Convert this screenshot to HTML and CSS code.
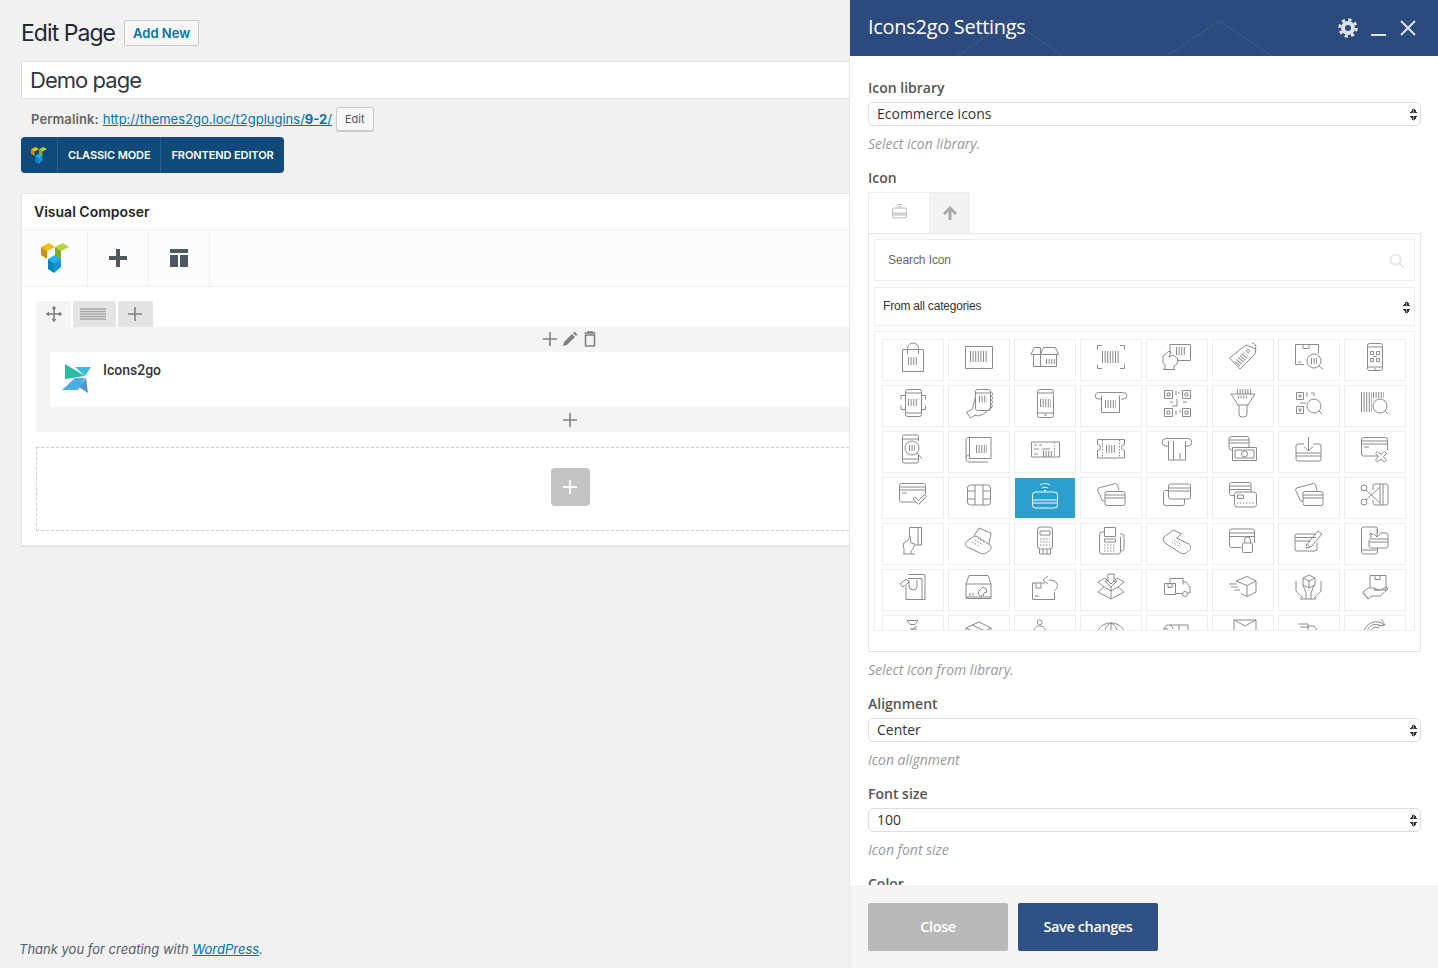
FILE: index.html
```html
<!DOCTYPE html>
<html lang="en">
<head>
<meta charset="utf-8">
<title>Edit Page</title>
<link rel="stylesheet" href="styles.css">
</head>
<body>
<svg class="defs" aria-hidden="true">
  <symbol id="vc" viewBox="41 242 28 30">
    <path fill="#fdb813" d="M41 246l8-4 6 4-8 4z"/>
    <path fill="#c9920e" d="M41 246l6 4v8l-6-4z"/>
    <path fill="#b5d334" d="M55 246l8-4 6 4-8 4z"/>
    <path fill="#8aa82c" d="M55 246l6 4v8l-6 4v-8z"/>
    <path fill="#1cb3f0" d="M48 258l7-4 6 4-7 4z"/>
    <path fill="#0b83bd" d="M48 258l6 4v10l-6-4z"/>
    <path fill="#1496d4" d="M54 262l7-4v8l-7 6z"/>
  </symbol>
</svg>

<main class="wrap">
  <div class="head"><h1>Edit Page</h1><a class="addnew">Add New</a></div>
  <div class="title">Demo page</div>
  <div class="perma"><b>Permalink:</b><a class="link plink">http://themes2go.loc/t2gplugins/<b>9-2</b>/</a><span class="editbtn">Edit</span></div>
  <div class="modes">
    <span class="mode-logo"><svg class="mini"><use href="#vc"/></svg></span>
    <span class="mode">CLASSIC MODE</span>
    <span class="mode">FRONTEND EDITOR</span>
  </div>
  <section class="vc">
    <div class="vc-title">Visual Composer</div>
    <div class="vc-bar">
      <span class="vc-cell"><svg class="vc-logo"><use href="#vc"/></svg></span>
      <span class="vc-cell"><svg class="tb" viewBox="0 0 20 20"><path d="M8 1h4v7h7v4h-7v7H8v-7H1V8h7z"/></svg></span>
      <span class="vc-cell"><svg class="tb" viewBox="0 0 20 20"><path d="M1 1h18v4H1zM1 7h8v12H1zM11 7h8v12h-8z"/></svg></span>
    </div>
    <div class="canvas">
      <div class="tabs">
        <span class="tab tab-move"><svg class="gl" viewBox="0 0 16 16"><path d="M8 1v14M1 8h14M6.500 3L8 1l1.500 2M6.500 13L8 15l1.500-2M3 6.500L1 8l2 1.500M13 6.500L15 8l-2 1.500"/></svg></span>
        <span class="tab tab-lines"><svg class="lines" viewBox="0 0 26 13"><path d="M0 1h26M0 3.500h26M0 6h26M0 8.500h26M0 11h26"/></svg></span>
        <span class="tab tab-plus"><svg class="gl" viewBox="0 0 16 16"><path d="M8 1v14M1 8h14"/></svg></span>
      </div>
      <div class="rowbody">
        <div class="rowtools">
          <svg class="gl" viewBox="0 0 16 16"><path d="M8 1v14M1 8h14"/></svg>
          <svg class="gl" viewBox="0 0 16 16"><path class="solid" d="M1 15l1-4 8-8 3 3-8 8zM11 2l1.500-1.500 3 3L14 5z"/></svg>
          <svg class="gl" viewBox="0 0 16 16"><path d="M3.500 4h9v10.500a.5.5 0 0 1-.5.5H4a.5.5 0 0 1-.5-.5zM2.500 2h11M5 1h6"/></svg>
        </div>
        <div class="card">
          <svg class="brand" viewBox="62 364 30 30">
            <path fill="#2bbba3" d="M65 364l20 12-20 3z"/>
            <path fill="#36bfdc" d="M75 367l16 0-6 9z"/>
            <path fill="#48b0e4" d="M62 390l13-12 10 0-7 12z"/>
            <path fill="#4f95cf" d="M79 387l7-9 2 15z"/>
          </svg>
          <span class="brandname">Icons2go</span>
        </div>
        <div class="rowfoot"><svg class="gl" viewBox="0 0 16 16"><path d="M8 1v14M1 8h14"/></svg></div>
      </div>
      <div class="dashed"><span class="addrow"><svg class="addplus" viewBox="0 0 16 16"><path d="M8 1v14M1 8h14"/></svg></span></div>
    </div>
  </section>
  <footer class="thanks">Thank you for creating with <a class="link">WordPress</a>.</footer>
</main>

<aside class="panel">
  <header class="p-head">
    <svg class="p-bg" viewBox="0 0 588 56"><path d="M107 56L160 20l53 36M317 56l52-35 53 35"/></svg>
    <h2>Icons2go Settings</h2>
    <div class="p-ctrl">
      <svg class="gear" viewBox="0 0 20 20"><circle class="gear-ring" cx="10" cy="10" r="5"/><circle class="gear-teeth" cx="10" cy="10" r="8.200"/></svg>
      <svg class="ctl" viewBox="0 0 16 16"><path d="M0 15h15"/></svg>
      <svg class="ctl" viewBox="0 0 16 16"><path d="M1 1l14 14M15 1L1 15"/></svg>
    </div>
  </header>
  <div class="p-body">
    <div class="label">Icon library</div>
    <div class="sel">Ecommerce icons<span class="arrows"></span></div>
    <div class="help">Select icon library.</div>

    <div class="label">Icon</div>
    <div class="pick-tabs">
      <span class="pt pt-icon"><svg class="pt-svg" viewBox="18 6 26 26"><path d="M26 8c3-2 7-2 10 0M28 11c2-1 4-1 6 0"/><rect x="18.500" y="13" width="25" height="17" rx="3"/><path d="M18.500 22h25M18.500 25h25"/></svg></span>
      <span class="pt pt-up"><svg class="up" viewBox="0 0 16 16"><path d="M8 1l7 7-2 2-3.500-3.500V15h-3V6.500L3 10 1 8z"/></svg></span>
    </div>
    <div class="picker">
      <div class="search">Search Icon<svg class="mag" viewBox="0 0 16 16"><circle cx="6.500" cy="6.500" r="5"/><path d="M10 10l5 5"/></svg></div>
      <div class="cat">From all categories<span class="arrows"></span></div>
      <div class="grid">
        <div class="cell"><svg class="ic" viewBox="1 1 60 40"><path d="M20.500 10.500h21v22h-21zM25.500 15V9.500a5.500 5.500 0 0 1 11 0V15"/><path class="bc" stroke-width="8" d="M26 22h10"/></svg></div>
        <div class="cell"><svg class="ic" viewBox="1 1 60 40"><path d="M17.500 7.500h27v22h-27z"/><path class="bc" stroke-width="11" d="M22 17.500h17"/></svg></div>
        <div class="cell"><svg class="ic" viewBox="1 1 60 40"><path d="M19.500 15.500v12h23v-12M26.500 15.500v12M19.500 15.500H17l3-7h6.500v7zM26.500 15.500l3-7h12l3 7z"/><path class="bc" stroke-width="5" d="M32 22.500h9"/></svg></div>
        <div class="cell"><svg class="ic" viewBox="1 1 60 40"><path d="M22 6.500h-4.500v4M40 6.500h4.500v4M22 29.500h-4.500v-4M40 29.500h4.500v-4"/><path class="bc" stroke-width="12" d="M22 18h18"/></svg></div>
        <div class="cell"><svg class="ic" viewBox="1 1 60 40"><path d="M24 14V5.500h20.500v16h-13M19 30v-4l-2-3v-6l6-5 2 1-2 5 4-2 5 4-1 5-3 2v3M17 30.500h12"/><path class="bc" stroke-width="8" d="M30 12h9"/></svg></div>
        <div class="cell"><svg class="ic" viewBox="1 1 60 40"><path d="M17.500 19L34 6l10 4-1 5-15 15zM36 10.500a1.500 1.500 0 1 0 .1 0M40 4c3 0 5 3 3 7"/><path class="bc" stroke-width="7" d="M25 25L34 15"/></svg></div>
        <div class="cell"><svg class="ic" viewBox="1 1 60 40"><path d="M26 25.500h-8.500v-20h23v9M25 5.500v4h6v-4M20 23h3M41 27l4 3"/><circle cx="36" cy="22" r="7"/><path class="bc" stroke-width="6" d="M33 22h6"/></svg></div>
        <div class="cell"><svg class="ic" viewBox="1 1 60 40"><rect x="23.500" y="4.500" width="15" height="27" rx="2"/><path d="M23.500 8h15M23.500 28h15M30 30h2M26.500 12.500h3v3h-3zM32.500 12.500h3v3h-3zM26.500 19.500h3v3h-3zM32.500 19.500h3v3h-3zM29 17.500h4"/></svg></div>

        <div class="cell"><svg class="ic" viewBox="1 1 60 40"><rect x="23.500" y="4.500" width="16" height="27" rx="2"/><path d="M23.500 8h16M23.500 28h16M23 10.500h-4v4M40 10.500h3.500v4M23 24.500h-4v-4M40 24.500h3.500v-4"/><path class="bc" stroke-width="7" d="M26 17.500h10"/></svg></div>
        <div class="cell"><svg class="ic" viewBox="1 1 60 40"><rect x="27.500" y="4.500" width="15" height="21" rx="2"/><path d="M27.500 8h15M42.500 7c3 0 3 4 0 4 3 0 3 4 0 4 3 0 3 4 0 4 3 0 2 4-1 5l-6 5-5 2-4-1M27.500 12l-2 7-1 5-6 3 4 6 5-3"/><path class="bc" stroke-width="7" d="M31 14h8"/></svg></div>
        <div class="cell"><svg class="ic" viewBox="1 1 60 40"><rect x="23.500" y="4.500" width="16" height="28" rx="2"/><path d="M23.500 8h16M23.500 28h16M30 30h3"/><path class="bc" stroke-width="8" d="M26 18h11"/></svg></div>
        <div class="cell"><svg class="ic" viewBox="1 1 60 40"><path d="M21 14h-2.500a2 2 0 0 1 0-6.500h25a2 2 0 0 1 0 6.500H41M21.500 10.500v17h18v-17"/><path class="bc" stroke-width="8" d="M25 19h11"/></svg></div>
        <div class="cell"><svg class="ic" viewBox="1 1 60 40"><path d="M18.500 5.500h8v8h-8zM36.500 5.500h8v8h-8zM18.500 23.500h8v8h-8zM36.500 23.500h8v8h-8zM21 8h3v3h-3zM39 8h3v3h-3zM21 26h3v3h-3zM39 26h3v3h-3zM30 6v4M33 7v2M24 17h3M31 14v7h-5M37 17h4M30 25v5M34 25v3"/></svg></div>
        <div class="cell"><svg class="ic" viewBox="1 1 60 40"><path d="M19 9h24l-7 11H26zM27 20v9a3 3 0 0 0 3 3h2a3 3 0 0 0 3-3v-9"/><path class="bc" stroke-width="5" d="M25 6.500h14"/><path class="bc" stroke-width="3" d="M26 12h10"/></svg></div>
        <div class="cell"><svg class="ic" viewBox="1 1 60 40"><path d="M18.500 7.500h7v7h-7zM18.500 21.500h7v7h-7zM21 10h2v2h-2zM21 24h2v2h-2zM29 7v5M33 8h3v3M22 18h6"/><circle cx="36" cy="21" r="7"/><path d="M41 26l3 3"/></svg></div>
        <div class="cell"><svg class="ic" viewBox="1 1 60 40"><path class="bc" stroke-width="20" d="M17 17h11"/><path class="bc" stroke-width="6" d="M29 10h11"/><circle cx="36" cy="21" r="7"/><path d="M41 26l3 3"/></svg></div>

        <div class="cell"><svg class="ic" viewBox="1 1 60 40"><path d="M36.500 10V6a2 2 0 0 0-2-2h-12a2 2 0 0 0-2 2v24a2 2 0 0 0 2 2h12a2 2 0 0 0 2-2v-6M20.500 8h16M20.500 28h16M35 22l5 6"/><circle cx="30" cy="17" r="7"/><path class="bc" stroke-width="6" d="M27 17h6"/></svg></div>
        <div class="cell"><svg class="ic" viewBox="1 1 60 40"><path d="M21.500 6.500H43v21H21.500zM21.500 6.500c-3 0-3.500 1-3.500 3v18c0 2 1 3.500 3 3.500h19M18 27c0-2 2-3 3.500-3"/><path class="bc" stroke-width="8" d="M28 18h11"/></svg></div>
        <div class="cell"><svg class="ic" viewBox="1 1 60 40"><path d="M17.500 11h28v15h-28zM20 14h3M25 14h3M20 18h5M28 18h8M20 23h4"/><path class="dash" d="M40.500 11v15"/><path class="bc" stroke-width="6" d="M29 23h9"/></svg></div>
        <div class="cell"><svg class="ic" viewBox="1 1 60 40"><path d="M17.500 8.500h27v5a3 3 0 0 0 0 6V27h-27v-7.500a3 3 0 0 0 0-6z"/><path class="dash" d="M22.500 9v18M39.500 9v18"/><path class="bc" stroke-width="8" d="M26 18h10"/></svg></div>
        <div class="cell"><svg class="ic" viewBox="1 1 60 40"><path d="M22 15h-2a2.500 2.500 0 0 1 0-7.500h22a2.500 2.500 0 0 1 0 7.500h-2.500M22.500 10v19h17V10M27.500 10v19M34 22v6"/></svg></div>
        <div class="cell"><svg class="ic" viewBox="1 1 60 40"><path d="M21 19h-1.500A2.500 2.500 0 0 1 17 16.500V8a2.500 2.500 0 0 1 2.500-2.500h15A2.500 2.500 0 0 1 37 8v8M17 9h20M17 12h20M20.500 16.500h24v13h-24zM23 19h19v8H23z"/><circle cx="32.500" cy="23" r="3"/></svg></div>
        <div class="cell"><svg class="ic" viewBox="1 1 60 40"><path d="M26 13h-6a2 2 0 0 0-2 2v13a2 2 0 0 0 2 2h21a2 2 0 0 0 2-2V15a2 2 0 0 0-2-2h-6M18 22h25M18 25h25M30.500 6v14M26 15.500l4.500 4.500 4.500-4.500"/></svg></div>
        <div class="cell"><svg class="ic" viewBox="1 1 60 40"><path d="M34 25H19.500a2 2 0 0 1-2-2V8.500a2 2 0 0 1 2-2h22a2 2 0 0 1 2 2V19M17.500 10h26M17.500 13h26M20 16h5M33.500 20.500l3.500 3 3.500-3 2 2-3 3 3 3.500-2 2-3.500-3-3.500 3-2-2 3-3.500-3-3z"/></svg></div>

        <div class="cell"><svg class="ic" viewBox="1 1 60 40"><path d="M34 25H19.500a2 2 0 0 1-2-2V8.500a2 2 0 0 1 2-2h22a2 2 0 0 1 2 2V17M17.500 10h26M17.500 13h26M20 16h5M31 22l2-2 3.500 3.500 6-6 2 2-8 8z"/></svg></div>
        <div class="cell"><svg class="ic" viewBox="1 1 60 40"><rect x="19.500" y="8" width="23" height="20" rx="3"/><path d="M27 8v6h-7.500M27 28v-6h-7.500M27 14v8M35 8v6h7.500M35 28v-6h7.500M35 14v8"/></svg></div>
        <div class="cell on"><svg class="ic" viewBox="1 1 60 40"><path d="M26 8c3-2 7-2 10 0M28 11c2-1 4-1 6 0M30 13.500h2"/><rect x="18.500" y="15" width="25" height="16" rx="3"/><path d="M18.500 23h25M18.500 26h25"/></svg></div>
        <div class="cell"><svg class="ic" viewBox="1 1 60 40"><path d="M24.500 24h-2l-5-11 1-2 17-4.500 2 1 1.500 6"/><rect x="25" y="14.500" width="20" height="14" rx="2"/><path d="M25 18h20M25 21h20"/></svg></div>
        <div class="cell"><svg class="ic" viewBox="1 1 60 40"><rect x="22.500" y="7" width="22" height="15" rx="2"/><path d="M22.500 11h22M22.500 14h22M22.500 13.500h-3a2 2 0 0 0-2 2v11a2 2 0 0 0 2 2h17a2 2 0 0 0 2-2V22"/></svg></div>
        <div class="cell"><svg class="ic" viewBox="1 1 60 40"><path d="M22 18.500h-2.500a2 2 0 0 1-2-2v-9a2 2 0 0 1 2-2H37a2 2 0 0 1 2 2v8M17.500 9H39M17.500 12.500H39"/><rect x="22.500" y="15" width="22" height="15" rx="2.500"/><path d="M25.500 18h6v3.500h-6z"/><path class="dash" d="M25 26h17"/></svg></div>
        <div class="cell"><svg class="ic" viewBox="1 1 60 40"><path d="M24.500 24h-2l-5-11 1-2 17-4.500 2 1 1.500 6"/><rect x="25" y="14.500" width="20" height="14" rx="2"/><path d="M25 18h20M25 21h20"/></svg></div>
        <div class="cell"><svg class="ic" viewBox="1 1 60 40"><path d="M29 13V9a2 2 0 0 1 2-2h11a2 2 0 0 1 2 2v17a2 2 0 0 1-2 2H31a2 2 0 0 1-2-2v-3M36 7v21M39 7v21M22 13l14 13M22 23l14-13"/><circle cx="20" cy="11" r="3"/><circle cx="20" cy="25" r="3"/></svg></div>

        <div class="cell"><svg class="ic" viewBox="1 1 60 40"><path d="M27.500 13V4.500h12V22h-6M36 5v17M22 31v-5l-1-5 5-4 2-4 1 7 4 1-2 5-2 2v3M21 31h12"/></svg></div>
        <div class="cell"><svg class="ic" viewBox="1 1 60 40"><path d="M19 18l6-4c2-1 4-1 5 0l12 8c2 2 1 5-1 6l-3 2c-2 1-4 1-6 0l-13-6c-2-1-2-4 0-6zM26 13l5-8 12 5-2 11"/><path class="dash" d="M27 17l8 5M30 15l7 5M24 19l8 5"/></svg></div>
        <div class="cell"><svg class="ic" viewBox="1 1 60 40"><rect x="23.500" y="4" width="15" height="22" rx="3"/><path d="M26 8h10v4H26zM25.500 26v5h11v-5M29 26v5M33 26v5"/><path class="dash" d="M26 16h10M26 19h10M26 22h10"/></svg></div>
        <div class="cell"><svg class="ic" viewBox="1 1 60 40"><path d="M24 9h-2a2.500 2.500 0 0 0-2.500 2.500v17A2.500 2.500 0 0 0 22 31h16a2.500 2.500 0 0 0 2.500-2.500V14M24.500 4.500h11v9h-11zM24.500 16h11v3h-11zM40 11h2a2 2 0 0 1 2 2v12c0 2-1 3-3 3"/><path class="dash" d="M24 22h12M24 25h12M24 28h12"/></svg></div>
        <div class="cell"><svg class="ic" viewBox="1 1 60 40"><path d="M17.500 15c0-1 1-2 2-2l5-4 3-2 8 4-5 4 12 6c2 1 3 4 1 6l-2 2c-2 2-5 2-7 1L19 20c-1-1-2-3-1.500-5z"/><path class="dash" d="M28 17l8 5M26 19l8 5"/></svg></div>
        <div class="cell"><svg class="ic" viewBox="1 1 60 40"><path d="M29 24.500h-9.500a2 2 0 0 1-2-2V8a2 2 0 0 1 2-2h21a2 2 0 0 1 2 2v12M17.500 10h25M17.500 13.500h25M32.500 20v-3a3 3 0 0 1 6 0v3"/><rect x="30.500" y="20" width="10" height="9.500" rx="1"/></svg></div>
        <div class="cell"><svg class="ic" viewBox="1 1 60 40"><path d="M39 20v6a2 2 0 0 1-2 2H19a2 2 0 0 1-2-2V13a2 2 0 0 1 2-2h19M17 14.500h21M17 18h16M28 25l1-4 11-13 4 3-11 13zM29 21l3 3"/></svg></div>
        <div class="cell"><svg class="ic" viewBox="1 1 60 40"><path d="M33.500 10V6a2 2 0 0 0-2-2h-12a2 2 0 0 0-2 2v23a2 2 0 0 0 2 2h12a2 2 0 0 0 2-2v-4M17.500 27h16M36 10h6a2 2 0 0 1 2 2v11a2 2 0 0 1-2 2H27a2 2 0 0 1-2-2v-6M25 19h19M25 16h19M33 6v8M30 11l3 3 3-3M27 15v-5M25 12l2-2 2 2"/></svg></div>

        <div class="cell"><svg class="ic" viewBox="1 1 60 40"><path d="M26 5.500h17v25H24V17M26 9.500h14v21M40 5.500l3 0M27 11v6a4 4 0 0 0 8 0v-6M18 15l6-5 3 3-6 5z"/></svg></div>
        <div class="cell"><svg class="ic" viewBox="1 1 60 40"><path d="M18 15l3-8.500h19l3 8.500M18 15h25v14.500H18zM18 28h25M22 24v3M25 24v3M31 22l4-4 3 2 1 3-3 1-1 3h-3l-2-2z"/></svg></div>
        <div class="cell"><svg class="ic" viewBox="1 1 60 40"><path d="M31 14H18.500v16.500h22V23M27 14v5h-5v-5M40 22c3-2 4-5 3-7-1-3-4-4-8-4M34 7l-5 4 5 4M21 27h4"/></svg></div>
        <div class="cell"><svg class="ic" viewBox="1 1 60 40"><path d="M18 13l7-4 6 6 6-6 7 4-6 5 6 5-13 7-13-7 6-5zM31 18v12M24 18l7 4 7-4M28 5h6v7h3l-6 6-6-6h3z"/></svg></div>
        <div class="cell"><svg class="ic" viewBox="1 1 60 40"><path d="M18.500 14.500h11v11h-11zM22 14.500v4h4v-4M24 14V9.500h13v6M37 13h3l4 5v6h-2M37 24.500h-7"/><circle cx="39" cy="25" r="2.500"/></svg></div>
        <div class="cell"><svg class="ic" viewBox="1 1 60 40"><path d="M24 12l11-4.500 9 4.500v11l-9 4.500-6-3M24 12l11 4.500 9-4.500M35 16.500v11M17 15h8M19 18h7M22 21h6"/></svg></div>
        <div class="cell"><svg class="ic" viewBox="1 1 60 40"><path d="M31 6l6 3v7l-6 3-6-3V9zM25 9l6 3 6-3M31 12v7M18 12v9c0 3 4 4 6 7v2M25 16l3 8v6M43 12v9c0 3-4 4-6 7v2M36 16l-3 8v6M22 30h16"/></svg></div>
        <div class="cell"><svg class="ic" viewBox="1 1 60 40"><path d="M26 18V6.500h16V21h-6M31 6.500v4h5v-4M19 23l5-4h6l5 2h-5 7l5-3 2 2-8 7h-8l-4 3zM18.500 24l5 5"/></svg></div>

        <div class="cell"><svg class="ic" viewBox="1 1 60 40"><path d="M25 5.500h11l-3 4h-5zM35 11l-8 6M28 14h7"/></svg></div>
        <div class="cell"><svg class="ic" viewBox="1 1 60 40"><path d="M18 13l13-6 12 6M18 13l13 6 12-6M18 13v10M43 13v10M24 10l13 6"/></svg></div>
        <div class="cell"><svg class="ic" viewBox="1 1 60 40"><circle cx="25.700" cy="7.300" r="2.500"/><path d="M20 17c0-4 2-6 5.700-6s5.700 2 5.700 6"/></svg></div>
        <div class="cell"><svg class="ic" viewBox="1 1 60 40"><path d="M18 16c2-5 7-8 13-8s11 3 13 8M31 8v8M25 16c0-3 2-6 6-8M37 16c0-3-2-6-6-8"/></svg></div>
        <div class="cell"><svg class="ic" viewBox="1 1 60 40"><path d="M18 14l3-4h4l2 4M24 10h18v6M33 10v6M19 16h24M17 14h5"/></svg></div>
        <div class="cell"><svg class="ic" viewBox="1 1 60 40"><path d="M22 5h22v11H22zM22 5l11 6 11-6"/></svg></div>
        <div class="cell"><svg class="ic" viewBox="1 1 60 40"><path d="M20 9h10v7M22 12h9M30 11h6l4 5"/></svg></div>
        <div class="cell"><svg class="ic" viewBox="1 1 60 40"><path d="M20 18a12 12 0 0 1 20-8M23 17a9 9 0 0 1 14-6M26 17a6 6 0 0 1 9-4M37 4l4 6-7 1"/></svg></div>
      </div>
    </div>
    <div class="help">Select icon from library.</div>

    <div class="label">Alignment</div>
    <div class="sel">Center<span class="arrows"></span></div>
    <div class="help">Icon alignment</div>

    <div class="label">Font size</div>
    <div class="sel">100<span class="arrows"></span></div>
    <div class="help">Icon font size</div>

    <div class="label">Color</div>
  </div>
  <footer class="p-foot">
    <span class="btn btn-close">Close</span>
    <span class="btn btn-save">Save changes</span>
  </footer>
</aside>
</body>
</html>
```

FILE: styles.css
```css
* { box-sizing: border-box; }
html, body { margin: 0; height: 100%; }
body {
  background: #f1f1f1;
  overflow: hidden;
  font-family: Inter, "Liberation Sans", sans-serif;
  color: #23282d;
  position: relative;
}
.defs { display: none; }

.wrap {
  width: 1098px;
  height: 968px;
  margin-left: 21px;
  display: flex;
  flex-direction: column;
}
.head {
  display: flex;
  align-items: center;
  gap: 9px;
  margin-top: 20px;
  height: 26px;
}
h1 { margin: 0; font-size: 23px; font-weight: 400; letter-spacing: -0.95px; }
.addnew {
  height: 26px;
  padding: 0 8px;
  border: 1px solid #ccc;
  border-radius: 2px;
  background: #f7f7f7;
  color: #0073aa;
  font-size: 13px;
  font-weight: 600;
  line-height: 24px;
}
.title {
  margin-top: 15px;
  height: 38px;
  background: #fff;
  border: 1px solid #ddd;
  padding-left: 8px;
  font-size: 22px;
  line-height: 36px;
  letter-spacing: -0.95px;
  color: #32373c;
}
.perma {
  display: flex;
  align-items: center;
  height: 25px;
  margin-top: 8px;
  padding-left: 10px;
  font-size: 13px;
  color: #666;
  white-space: pre;
}
.perma > b { font-weight: 600; letter-spacing: 0.1px; }
.link { color: #0073aa; text-decoration: underline; }
.plink { margin: 0 0 2px 4px; }
.editbtn {
  margin-left: 4px;
  height: 25px;
  padding: 0 8px;
  border: 1px solid #ccc;
  border-bottom-width: 2px;
  border-radius: 3px;
  background: #f7f7f7;
  color: #555;
  font-size: 11px;
  line-height: 22px;
}
.perma > b { margin-bottom: 2px; }
.modes {
  display: flex;
  width: 263px;
  height: 36px;
  margin-top: 5px;
  background: #0f4a7b;
  border-radius: 4px;
  color: #fff;
  font-size: 11px;
  font-weight: 600;
  letter-spacing: -0.1px;
  line-height: 36px;
}
.mode-logo { display: flex; align-items: center; justify-content: center; width: 36px; }
.mini { width: 16px; height: 17px; }
.mode { padding: 0 10px; border-left: 1px solid #2a5f8d; white-space: nowrap; }
.vc {
  margin-top: 20px;
  background: #fff;
  border: 1px solid #e5e5e5;
  box-shadow: 0 1px 1px rgba(0,0,0,.04);
}
.vc-title {
  height: 36px;
  padding-left: 12px;
  border-bottom: 1px solid #eee;
  font-size: 14px;
  font-weight: 600;
  line-height: 36px;
  color: #23282d;
}
.vc-bar {
  display: flex;
  height: 57px;
  background: #fcfcfc;
  border-bottom: 1px solid #f0f0f0;
}
.vc-cell {
  width: 61px;
  display: flex;
  align-items: center;
  justify-content: center;
  border-right: 1px solid #f0f0f0;
}
.vc-cell:first-child { width: 66px; }
.vc-logo { width: 28px; height: 30px; }
.tb { width: 20px; height: 20px; fill: #50575e; }
.canvas { padding: 14px 14px 14px; }
.tabs { display: flex; gap: 2px; height: 26px; }
.tab {
  display: flex;
  align-items: center;
  justify-content: center;
  border-radius: 2px 2px 0 0;
  background: #e4e4e4;
}
.tab-move { width: 35px; background: #f4f4f4; }
.tab-lines { width: 43px; padding-right: 3px; }
.tab-plus { width: 35px; padding-right: 1px; }
.gl { width: 16px; height: 16px; fill: none; stroke: #808080; stroke-width: 1.600; }
.solid { fill: #808080; stroke: none; }
.lines { width: 26px; height: 13px; fill: none; stroke: #a8a8a8; stroke-width: 1.500; }
.rowbody { background: #f4f4f4; padding: 0 14px; }
.rowtools {
  display: flex;
  justify-content: center;
  align-items: center;
  gap: 4px;
  height: 25px;
  padding-bottom: 2px;
}
.card {
  display: flex;
  height: 55px;
  background: #fff;
  border-radius: 2px;
  padding: 12px 0 0 12px;
}
.brand { width: 30px; height: 30px; }
.brandname {
  margin-left: 11px;
  font-family: Roboto, "Liberation Sans", sans-serif;
  font-size: 14px;
  font-weight: 500;
  line-height: 13px;
  color: #32373c;
}
.rowfoot { display: flex; justify-content: center; align-items: center; height: 25px; }
.dashed {
  margin-top: 15px;
  height: 84px;
  padding-bottom: 4px;
  border: 1px dashed #ccc;
  display: flex;
  align-items: center;
  justify-content: center;
}
.addrow {
  width: 39px;
  height: 38px;
  background: #c4c4c4;
  border-radius: 4px;
  display: flex;
  align-items: center;
  justify-content: center;
}
.addplus { width: 16px; height: 16px; fill: none; stroke: #fff; stroke-width: 1.800; }
.thanks {
  margin-top: auto;
  margin-bottom: 11px;
  margin-left: -2px;
  font-size: 13px;
  font-style: italic;
  color: #555d66;
  line-height: 16px;
}

/* settings panel: overlays the editor */
.panel {
  position: absolute;
  top: 0;
  right: 0;
  width: 588px;
  height: 968px;
  display: flex;
  flex-direction: column;
  background: #fff;
  font-family: "Open Sans", "Liberation Sans", sans-serif;
  box-shadow: -1px 0 0 #e6e6e6;
}
.p-head {
  position: relative;
  flex: none;
  height: 56px;
  background: #2c4a7e;
  color: #fff;
  display: flex;
  align-items: center;
  justify-content: space-between;
  padding: 0 22px 0 18px;
}
.p-bg {
  position: absolute;
  left: 0;
  top: 0;
  width: 588px;
  height: 56px;
  fill: none;
  stroke: #345386;
  stroke-width: 2;
}
h2 {
  position: relative;
  margin: 0;
  font-size: 20px;
  font-weight: 400;
  letter-spacing: -0.3px;
  line-height: 56px;
  padding-bottom: 2px;
}
.p-ctrl { position: relative; display: flex; align-items: center; gap: 13px; }
.gear { width: 20px; height: 20px; fill: none; stroke: #dde3ec; }
.gear-ring { stroke-width: 4; }
.gear-teeth { stroke-width: 3; stroke-dasharray: 3.220 3.220; }
.ctl { width: 16px; height: 16px; fill: none; stroke: #dde3ec; stroke-width: 2; }
.p-body {
  flex: 1;
  min-height: 0;
  overflow: hidden;
  padding: 22px 17px 0 18px;
}
.label {
  height: 20px;
  margin-bottom: 4px;
  font-size: 14px;
  font-weight: 600;
  line-height: 20px;
  color: #555;
}
.sel {
  position: relative;
  height: 24px;
  padding-left: 8px;
  background: #fff;
  border: 1px solid #ddd;
  border-radius: 5px;
  font-size: 14px;
  line-height: 22px;
  color: #333;
}
.arrows {
  position: absolute;
  right: 3px;
  top: 5px;
  width: 7px;
  height: 13px;
  background:
    linear-gradient(to top left, #333 50%, transparent 50%) left top / 3.500px 5px no-repeat,
    linear-gradient(to top right, #333 50%, transparent 50%) right top / 3.500px 5px no-repeat,
    linear-gradient(to bottom left, #333 50%, transparent 50%) left bottom / 3.500px 5px no-repeat,
    linear-gradient(to bottom right, #333 50%, transparent 50%) right bottom / 3.500px 5px no-repeat;
}
.help {
  height: 20px;
  margin: 8px 0 14px;
  font-size: 14px;
  font-style: italic;
  line-height: 20px;
  color: #999;
  letter-spacing: -0.02px;
}
.pick-tabs { display: flex; height: 41px; }
.pt {
  display: flex;
  align-items: center;
  justify-content: center;
  border: 1px solid #eee;
  border-bottom: 0;
}
.pt-icon { width: 62px; background: #fff; padding-bottom: 3px; }
.pt-up { width: 40px; background: #f3f3f3; border-left: 0; }
.pt-svg { width: 15px; height: 15px; fill: none; stroke: #aaa; stroke-width: 1.500; }
.up { width: 16px; height: 16px; fill: #aaa; }
.picker {
  height: 419px;
  border: 1px solid #e5e5e5;
  padding: 5px;
}
.search {
  position: relative;
  height: 42px;
  padding-left: 13px;
  border: 1px solid #eee;
  font-family: "Liberation Sans", sans-serif;
  font-size: 12px;
  letter-spacing: -0.1px;
  line-height: 40px;
  color: #666;
}
.mag {
  position: absolute;
  right: 9px;
  top: 13px;
  width: 16px;
  height: 16px;
  fill: none;
  stroke: #e8e8e8;
  stroke-width: 2;
}
.cat {
  position: relative;
  height: 39px;
  margin-top: 6px;
  padding-left: 8px;
  border: 1px solid #eee;
  font-family: "Liberation Sans", sans-serif;
  font-size: 12px;
  letter-spacing: -0.2px;
  line-height: 37px;
  color: #333;
}
.cat .arrows { top: 13px; right: 4px; }
.grid {
  display: grid;
  grid-template-columns: repeat(8, 62px);
  grid-auto-rows: 42px;
  gap: 4px;
  height: 300px;
  margin-top: 5px;
  padding: 7px;
  border: 1px solid #eee;
  overflow: hidden;
}
.cell { border: 1px solid #eee; background: #fff; }
.ic {
  display: block;
  width: 60px;
  height: 40px;
  fill: none;
  stroke: #8a8a8a;
  stroke-width: 1;
}
.bc { stroke-dasharray: 1 1.600; }
.dash { stroke-dasharray: 1.500 1.500; }
.on { background: #2a9fcd; border-color: #fff; }
.on .ic { stroke: #fff; }
.p-foot {
  flex: none;
  display: flex;
  gap: 10px;
  height: 83px;
  padding: 18px 18px 0;
  background: #f5f5f5;
}
.btn {
  width: 140px;
  height: 48px;
  border-radius: 2px;
  color: #fff;
  font-size: 14.500px;
  font-weight: 600;
  letter-spacing: -0.4px;
  line-height: 48px;
  text-align: center;
}
.btn-close { background: #b9b9b9; }
.btn-save { background: #2f5185; }
```
